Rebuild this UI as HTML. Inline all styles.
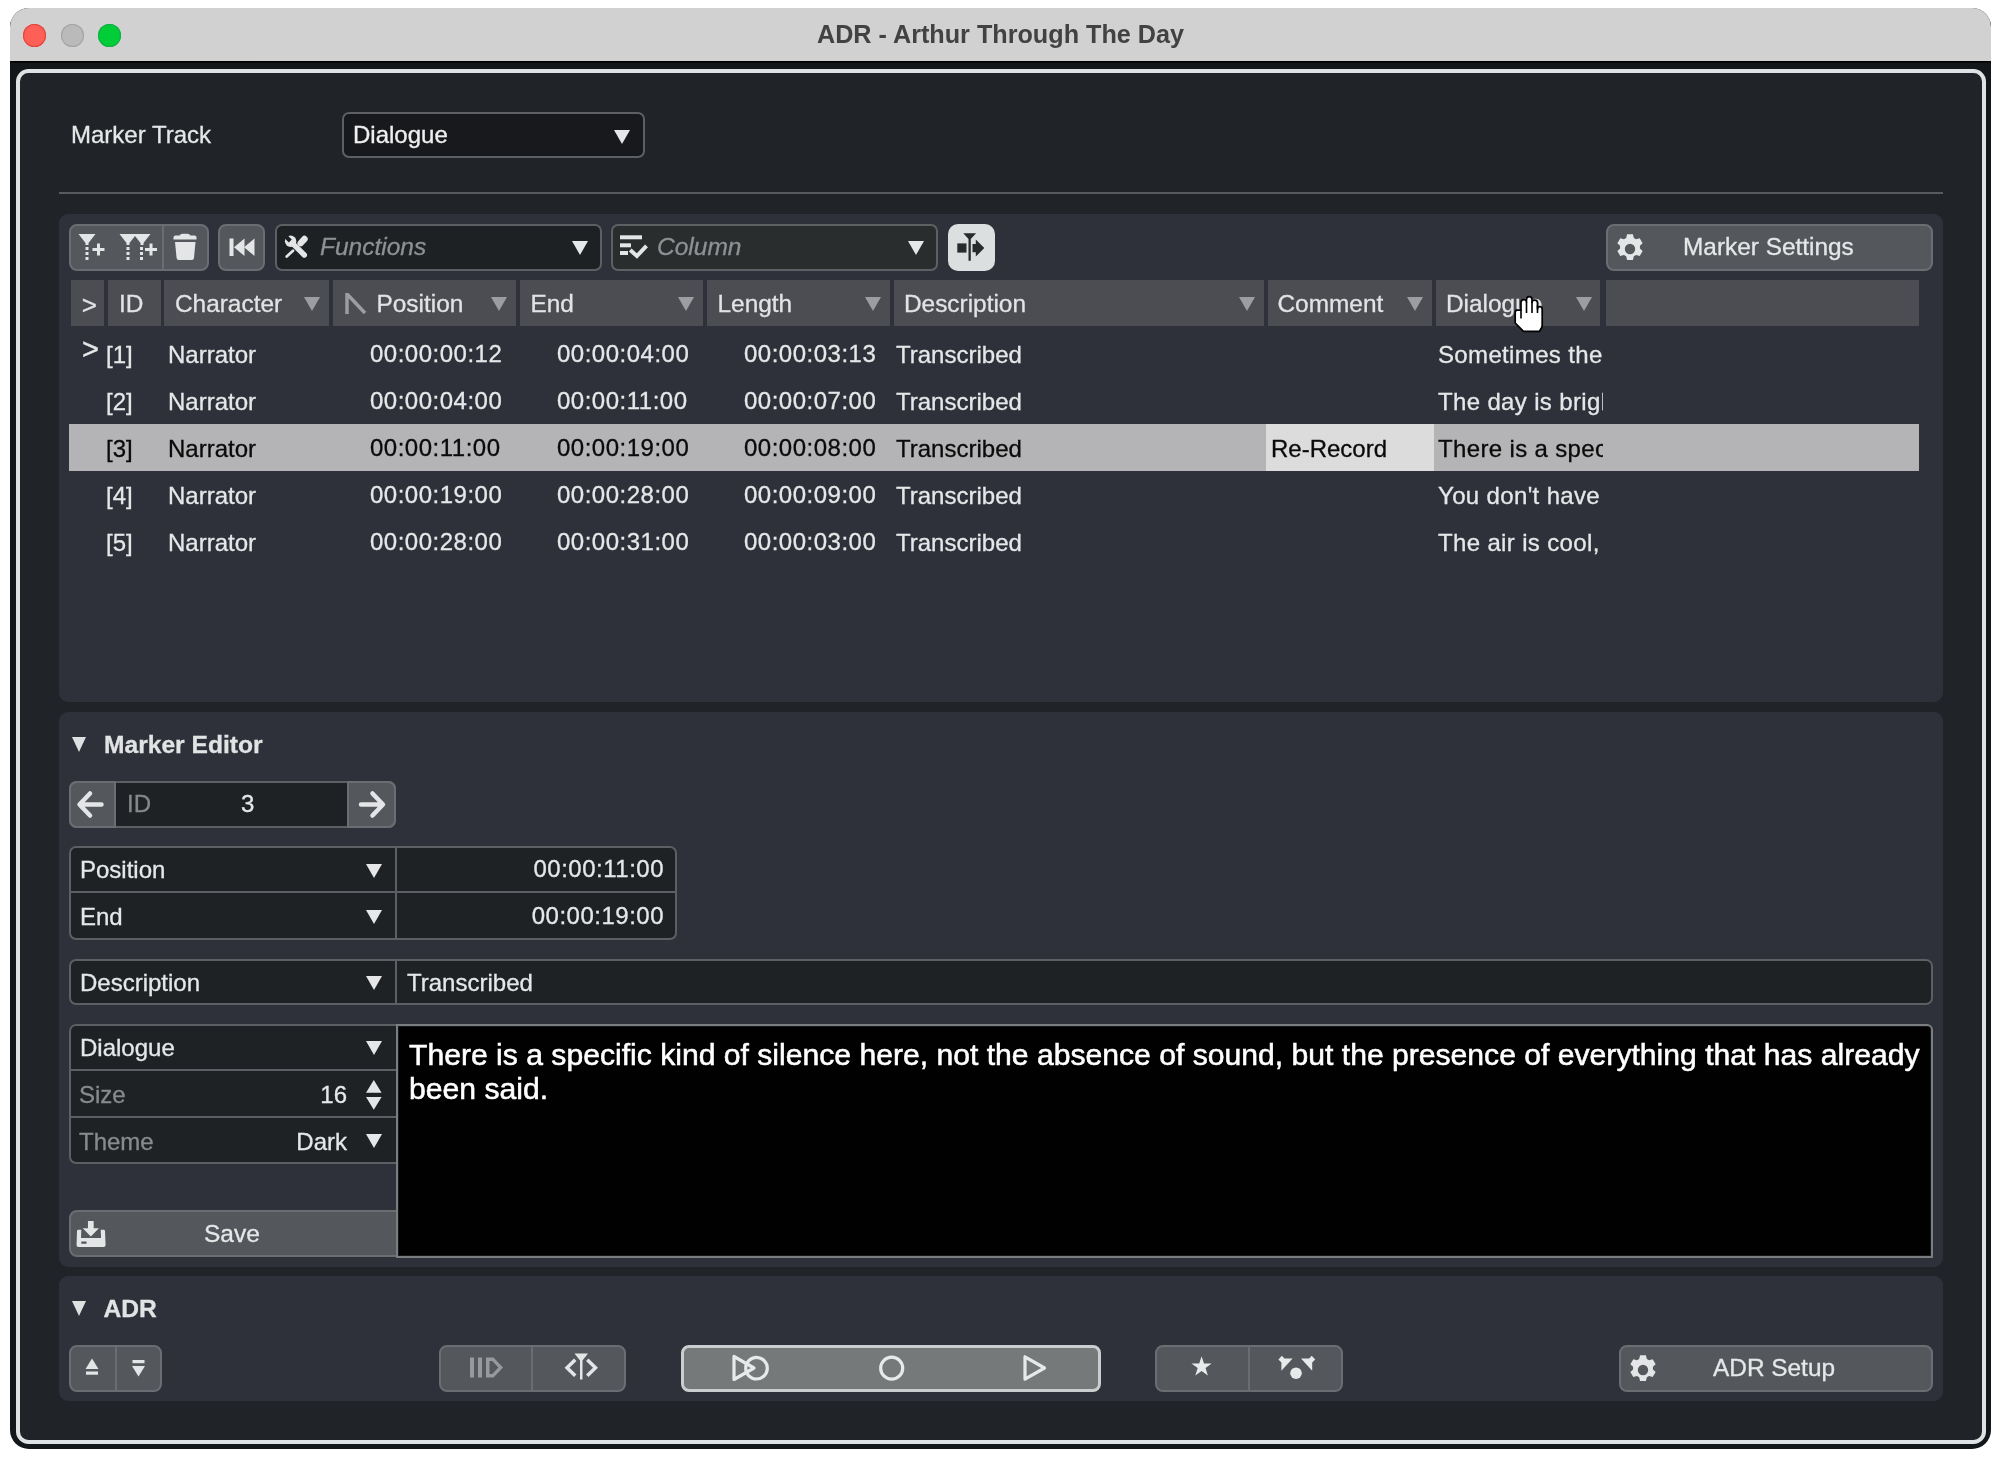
<!DOCTYPE html>
<html><head><meta charset="utf-8"><title>ADR - Arthur Through The Day</title>
<style>
*{box-sizing:border-box;margin:0;padding:0}
html,body{width:2000px;height:1458px;background:#fff;overflow:hidden}
body{font-family:"Liberation Sans",Arial,sans-serif;font-size:24px;color:#e6e7e8;position:relative}
.abs,.abs>*{position:absolute}
.win{position:absolute;left:9.700px;top:8px;width:1981.600px;height:1440.800px;background:#14171a;border-radius:19px;overflow:hidden}
.tbar{position:absolute;left:0;top:0;width:100%;height:52.800px;background:#d1d1d1;border-bottom:0 solid #000;box-shadow:0 1.600px 0 #000}
.title{position:absolute;left:0;top:0;width:100%;height:53px;line-height:52px;text-align:center;font-weight:bold;font-size:25.2px;color:#424242}
.tl{position:absolute;top:15.5px;width:23px;height:23px;border-radius:50%}
.frame{position:absolute;left:16.100px;top:68.700px;width:1969.800px;height:1375.800px;border:4px solid #dfe1e2;border-radius:12.500px;background:#202327}
.panel{position:absolute;left:59.200px;width:1883.600px;background:#2e3139;border-radius:9px}
.t{position:absolute;white-space:nowrap;line-height:30px;height:30px;-webkit-text-stroke:.3px}
.btn{position:absolute;background:#54575b;border:2px solid #6a6d71;border-radius:8px}
.dd{position:absolute;background:#1e2124;border:2px solid #5c5f63;border-radius:7px}
.hc{position:absolute;top:280.300px;height:46px;background:#4b4d52;font-size:24.4px}
.hc .t{top:8.700px;color:#e2e3e4}
.tri{position:absolute;width:0;height:0;border-left:8px solid transparent;border-right:8px solid transparent;border-top:14.500px solid #e6e7e8;margin:-.4px 0 0 -.2px}
.trig{border-top-color:#9b9da0;border-top-width:14.300px;border-left-width:8px;border-right-width:8px}
.row{position:absolute;left:69px;width:1849.500px;height:47px}
.row .t{top:10.300px}
.sel{background:#b4b4b6;color:#0a0a0a}
svg{position:absolute;overflow:visible}
.tc{font-size:24px;letter-spacing:.5px}
.dl{width:165px;overflow:hidden;letter-spacing:.35px}
#root{position:absolute;left:0;top:0;width:2000px;height:1458px;will-change:transform;opacity:.999}
</style></head><body><div id="root">
<svg width="0" height="0" style="position:absolute"><defs>
<path id="gear" fill="#e4e5e6" fill-rule="evenodd" d="M-2.600 -13h5.200l.8 3.300 2 1.100 3.200-1 2.600 4.500-2.400 2.300v2.300l2.400 2.300-2.600 4.500-3.200-1-2 1.100-.8 3.300h-5.200l-.8-3.300-2-1.100-3.200 1-2.600-4.500 2.400-2.300v-2.300l-2.400-2.300 2.600-4.500 3.200 1 2-1.100zM0 -4.600a4.600 4.600 0 1 0 0 9.200a4.600 4.600 0 1 0 0-9.200z"/>
</defs></svg>
<div class="win">
  <div class="tbar"></div>
  <div class="title">ADR - Arthur Through The Day</div>
  <div class="tl" style="left:13.800px;background:#fe5f57;box-shadow:0 0 0 1px #e0443e inset"></div>
  <div class="tl" style="left:51.400px;background:#bababa;box-shadow:0 0 0 1px #a3a3a3 inset"></div>
  <div class="tl" style="left:88.800px;background:#00cd38;box-shadow:0 0 0 1px #14ae46 inset"></div>
</div>
<div class="frame"></div>

<!-- Marker track -->
<div class="t" style="left:71px;top:120px">Marker Track</div>
<div class="dd" style="left:342px;top:111.800px;width:303px;height:46.600px;background:#17191c"></div>
<div class="t" style="left:353px;top:120px;color:#f0f0f0">Dialogue</div>
<div class="tri" style="left:614.3px;top:130.2px"></div>
<div style="position:absolute;left:59.200px;top:192px;width:1883.600px;height:2px;background:#575b5d"></div>

<!-- Panel 1 -->
<div class="panel" style="top:214.400px;height:487.800px"></div>
<!-- toolbar buttons -->
<div class="btn" style="left:69px;top:224px;width:140px;height:47px"></div>
<div style="position:absolute;left:162px;top:226px;width:2px;height:43px;background:#6a6d71"></div>
<svg style="left:69px;top:224px" width="140" height="47" viewBox="69 224 140 47" fill="#e4e5e6">
  <!-- funnel + -->
  <path d="M78.5 234h17l-7 9v2h-3v-2z"/>
  <rect x="85.5" y="247" width="3" height="3"/><rect x="85.5" y="252" width="3" height="3"/><rect x="85.5" y="257" width="3" height="3"/>
  <path d="M97 243.5h3v4.5h4.5v3h-4.5v4.500h-3v-4.500h-4.500v-3h4.500z"/>
  <!-- double funnel + -->
  <path d="M119.500 234h31l-7 9v2h-3v-2l-5.500-7-5.500 7v2h-3v-2z"/>
  <rect x="126.500" y="247" width="3" height="3"/><rect x="126.500" y="252" width="3" height="3"/><rect x="126.500" y="257" width="3" height="3"/>
  <rect x="140" y="247" width="3" height="3"/><rect x="140" y="252" width="3" height="3"/><rect x="140" y="257" width="3" height="3"/>
  <path d="M149.500 243.500h3v4.500h4.500v3h-4.500v4.500h-3v-4.500h-4.500v-3h4.500z"/>
  <!-- trash -->
  <path d="M173.500 237.500q0-2 2-2h4q1-1.700 3-1.700h5q2 0 3 1.700h4q2 0 2 2v2h-23z"/>
  <path d="M175 242h20.500l-1.500 16q-.2 2-2.200 2h-13q-2 0-2.200-2z"/>
</svg>
<div class="btn" style="left:218px;top:224px;width:47px;height:47px"></div>
<svg style="left:218px;top:224px" width="47" height="47" viewBox="218 224 47 47" fill="#e4e5e6">
  <rect x="229.500" y="238.500" width="4" height="17.500"/>
  <path d="M234 247.200l10.500-8.700v17.500z"/><path d="M244 247.200l10.500-8.700v17.500z"/>
</svg>
<!-- Functions dropdown -->
<div class="dd" style="left:275px;top:224px;width:327px;height:47px;background:#1e2124"></div>
<svg style="left:275px;top:224px" width="47" height="47" viewBox="275 224 47 47" fill="none" stroke="#e4e5e6" stroke-linecap="round">
  <path d="M291.500 242.300L304.300 255" stroke-width="5.400"/>
  <circle cx="290.600" cy="241.300" r="5.700" fill="#e4e5e6" stroke="none"/>
  <path d="M290.300 241L284 234.700" stroke="#1e2124" stroke-width="4.200" stroke-linecap="butt"/>
  <path d="M300.700 243.100L304.500 239" stroke-width="6.400"/>
  <path d="M293 250.700L286.700 256.500" stroke-width="2.700"/>
</svg>
<div class="t" style="left:320px;top:232px;font-style:italic;color:#8e9194;font-size:24.5px">Functions</div>
<div class="tri" style="left:572px;top:241.5px"></div>
<!-- Column dropdown -->
<div class="dd" style="left:611px;top:224px;width:327px;height:47px;background:#292d2e;border-color:#5e6164"></div>
<svg style="left:611px;top:224px" width="47" height="47" viewBox="611 224 47 47" fill="#e4e5e6">
  <rect x="620" y="235.300" width="22" height="4"/><rect x="620" y="243.300" width="11" height="4"/><rect x="620" y="251" width="8" height="4"/>
  <path d="M630.200 250l6.700 6 9.600-10.200" fill="none" stroke="#e4e5e6" stroke-width="4"/>
</svg>
<div class="t" style="left:657px;top:232px;font-style:italic;color:#8e9194;font-size:24.5px">Column</div>
<div class="tri" style="left:908.4px;top:241.5px"></div>
<!-- white button -->
<div style="position:absolute;left:947.600px;top:223.700px;width:47.200px;height:47.200px;background:#dcdfdf;border-radius:10px"></div>
<svg style="left:948px;top:224px" width="47" height="47" viewBox="948 224 47 47" fill="#272b2b">
  <path d="M963.300 233.200h12.800l-5.300 5.800v21.800h-2.300v-21.800z"/>
  <rect x="957.300" y="243.400" width="9.200" height="9.200"/>
  <path d="M972.500 243.900h3.300v-4.400l8.500 8.500-8.500 8.600v-4.400h-3.300z"/>
</svg>
<!-- Marker settings -->
<div class="btn" style="left:1606px;top:224px;width:327px;height:47px"></div>
<svg class="gear" style="left:1614.600px;top:234px" width="30" height="30" viewBox="-13.300 -13.300 26.600 26.600"><use href="#gear"/></svg>
<div class="t" style="left:1683px;top:232px;font-size:24.400px;color:#e6e7e8">Marker Settings</div>
<!-- header -->
<div class="hc" style="left:71px;width:33px"><div class="t" style="left:10.800px;font-size:26px;top:10px">&gt;</div></div>
<div class="hc" style="left:108px;width:53px"><div class="t" style="left:11px">ID</div></div>
<div class="hc" style="left:164px;width:165px"><div class="t" style="left:11px">Character</div><div class="tri trig" style="left:139.75px;top:17.400px"></div></div>
<div class="hc" style="left:332.500px;width:183px"><div class="t" style="left:44px">Position</div><div class="tri trig" style="left:158.75px;top:17.400px"></div>
  <svg style="left:12px;top:12px" width="22" height="24" viewBox="0 0 22 24"><path d="M2 1v21M2 2l18 19" stroke="#9b9da0" stroke-width="3.500" fill="none"/></svg></div>
<div class="hc" style="left:519.500px;width:183.500px"><div class="t" style="left:11px">End</div><div class="tri trig" style="left:158.50px;top:17.400px"></div></div>
<div class="hc" style="left:706.500px;width:183.500px"><div class="t" style="left:11px">Length</div><div class="tri trig" style="left:158.50px;top:17.400px"></div></div>
<div class="hc" style="left:894px;width:370px"><div class="t" style="left:10px">Description</div><div class="tri trig" style="left:345.25px;top:17.400px"></div></div>
<div class="hc" style="left:1267.500px;width:164.500px"><div class="t" style="left:10px">Comment</div><div class="tri trig" style="left:140.00px;top:17.400px"></div></div>
<div class="hc" style="left:1436px;width:164px"><div class="t" style="left:10px">Dialogue</div><div class="tri trig" style="left:140.00px;top:17.400px"></div></div>
<div class="hc" style="left:1606px;width:312.500px"></div>
<!-- rows -->
<div class="row" style="top:330px"><div class="t" style="left:13px;top:4px;font-size:29px;-webkit-text-stroke:.4px #e6e7e8">&gt;</div><div class="t" style="left:37px">[1]</div><div class="t" style="left:99px">Narrator</div><div class="t tc" style="left:301px;top:9px">00:00:00:12</div><div class="t tc" style="left:488px;top:9px">00:00:04:00</div><div class="t tc" style="left:675px;top:9px">00:00:03:13</div><div class="t" style="left:827px">Transcribed</div><div class="t dl" style="left:1369px">Sometimes the</div></div>
<div class="row" style="top:377px"><div class="t" style="left:37px">[2]</div><div class="t" style="left:99px">Narrator</div><div class="t tc" style="left:301px;top:9px">00:00:04:00</div><div class="t tc" style="left:488px;top:9px">00:00:11:00</div><div class="t tc" style="left:675px;top:9px">00:00:07:00</div><div class="t" style="left:827px">Transcribed</div><div class="t dl" style="left:1369px">The day is bright</div></div>
<div class="row sel" style="top:424px"><div style="position:absolute;left:1197px;top:0;width:168px;height:47px;background:#dcdcdc"></div><div class="t" style="left:37px">[3]</div><div class="t" style="left:99px">Narrator</div><div class="t tc" style="left:301px;top:9px">00:00:11:00</div><div class="t tc" style="left:488px;top:9px">00:00:19:00</div><div class="t tc" style="left:675px;top:9px">00:00:08:00</div><div class="t" style="left:827px">Transcribed</div><div class="t" style="left:1202px">Re-Record</div><div class="t dl" style="left:1369px">There is a specific</div></div>
<div class="row" style="top:471px"><div class="t" style="left:37px">[4]</div><div class="t" style="left:99px">Narrator</div><div class="t tc" style="left:301px;top:9px">00:00:19:00</div><div class="t tc" style="left:488px;top:9px">00:00:28:00</div><div class="t tc" style="left:675px;top:9px">00:00:09:00</div><div class="t" style="left:827px">Transcribed</div><div class="t dl" style="left:1369px">You don't have</div></div>
<div class="row" style="top:518px"><div class="t" style="left:37px">[5]</div><div class="t" style="left:99px">Narrator</div><div class="t tc" style="left:301px;top:9px">00:00:28:00</div><div class="t tc" style="left:488px;top:9px">00:00:31:00</div><div class="t tc" style="left:675px;top:9px">00:00:03:00</div><div class="t" style="left:827px">Transcribed</div><div class="t dl" style="left:1369px">The air is cool,</div></div>
<svg style="left:1510px;top:290px" width="40" height="46" viewBox="1510 290 40 46">
  <path d="M1515.200 312.500Q1515.200 310.200 1517.500 310.200H1521V302.500Q1521 299.700 1523.800 299.700Q1526.500 299.700 1526.500 302V299.500Q1526.500 296.700 1529.300 296.700Q1532 296.700 1532 299.500V302.500Q1532 300.200 1534.800 300.200Q1537.500 300.200 1537.500 303V309Q1537.500 306.700 1540 306.700Q1542.200 306.700 1542.200 309.500V325Q1542.200 328 1540.500 329.500L1539.500 331.300H1523.500L1515.200 323Z" fill="#fff" stroke="#000" stroke-width="1.700" stroke-linejoin="round"/>
  <path d="M1521 310V318.500M1526.500 302V313M1532 302V313M1537.500 305V313" stroke="#000" stroke-width="1.600" fill="none"/>
</svg>
<!-- PANEL1END -->

<!-- Panel 2 -->
<div class="panel" style="top:711.700px;height:555px"></div>
<div class="tri" style="left:72.500px;top:737px;border-left-width:7.500px;border-right-width:7.500px;border-top-width:15px;border-top-color:#dfe0e1"></div>
<div class="t" style="left:104px;top:730px;font-weight:bold;font-size:24.600px;color:#e2e3e4">Marker Editor</div>
<!-- ID nav -->
<div class="dd" style="left:69px;top:781px;width:327px;height:47px;background:#1f2225;border-color:#5c5f63"></div>
<div class="btn" style="left:69px;top:781px;width:47px;height:47px;border-radius:8px 0 0 8px"></div>
<div class="btn" style="left:347px;top:781px;width:49px;height:47px;border-radius:0 8px 8px 0"></div>
<svg style="left:69px;top:781px" width="327" height="47" viewBox="69 781 327 47" fill="none" stroke="#e4e5e6" stroke-width="4.500" stroke-linecap="round" stroke-linejoin="round">
  <path d="M101.500 804.500h-21M90 793.500l-10.500 11 10.500 11"/>
  <path d="M361 804.500h21M372.500 793.500l10.500 11-10.500 11"/>
</svg>
<div class="t" style="left:127px;top:789px;color:#85888b">ID</div>
<div class="t" style="left:241px;top:789px;color:#e6e7e8">3</div>
<!-- Position / End -->
<div class="dd" style="left:69px;top:846px;width:608px;height:94px;background:#1f2225"></div>
<div style="position:absolute;left:70px;top:891px;width:606px;height:2px;background:#5c5f63"></div>
<div style="position:absolute;left:394.500px;top:847px;width:2px;height:92px;background:#5c5f63"></div>
<div class="t" style="left:80px;top:855px">Position</div><div class="tri" style="left:366px;top:864.500px"></div>
<div class="t tc" style="left:464px;top:854px;width:200px;text-align:right">00:00:11:00</div>
<div class="t" style="left:80px;top:902px">End</div><div class="tri" style="left:366px;top:910.800px"></div>
<div class="t tc" style="left:464px;top:901px;width:200px;text-align:right">00:00:19:00</div>
<!-- Description -->
<div class="dd" style="left:69px;top:959px;width:1864px;height:45.600px;background:#1f2225"></div>
<div style="position:absolute;left:394.500px;top:960px;width:2px;height:44px;background:#5c5f63"></div>
<div class="t" style="left:80px;top:967.700px">Description</div><div class="tri" style="left:366px;top:976px"></div>
<div class="t" style="left:407px;top:967.700px">Transcribed</div>
<!-- Dialogue group -->
<div class="dd" style="left:69px;top:1024px;width:329px;height:140px;background:#1f2225;border-radius:7px 0 0 7px"></div>
<div style="position:absolute;left:70px;top:1069px;width:327px;height:2px;background:#5c5f63"></div>
<div style="position:absolute;left:70px;top:1116px;width:327px;height:2px;background:#5c5f63"></div>
<div class="t" style="left:80px;top:1032.700px">Dialogue</div><div class="tri" style="left:366px;top:1041.800px"></div>
<div class="t" style="left:79px;top:1079.700px;color:#888b8e">Size</div>
<div class="t" style="left:247px;top:1079.700px;width:100px;text-align:right">16</div>
<svg style="left:366px;top:1080px" width="16" height="30" viewBox="0 0 16 30" fill="#e4e5e6"><path d="M7.800 0l7.800 12.700h-15.600zM7.800 29.800l7.800-12.700h-15.600z"/></svg>
<div class="t" style="left:79px;top:1126.700px;color:#888b8e">Theme</div>
<div class="t" style="left:247px;top:1126.700px;width:100px;text-align:right">Dark</div><div class="tri" style="left:366px;top:1134.800px"></div>
<!-- Save -->
<div class="btn" style="left:69px;top:1210px;width:329px;height:47px;border-radius:8px 0 0 8px"></div>
<svg style="left:76.700px;top:1220.800px" width="28.600" height="27" viewBox="0 0 30 28" preserveAspectRatio="none" fill="#e4e5e6">
  <path d="M11.500 0h6v7.500h5.500l-8.500 8.500-8.500-8.500h5.500z"/>
  <path fill-rule="evenodd" d="M0 10.500q0-1.500 1.500-1.500h3l-0.300 8.500h21l-0.300-8.500h3q1.500 0 1.500 1.500l.6 14.500q0 2-2 2h-26.500q-2 0-2-2zM4.500 21.300v2.200h5.500v-2.200z"/>
</svg>
<div class="t" style="left:204px;top:1219px;font-size:24.500px">Save</div>
<!-- Text area -->
<div style="position:absolute;left:396.200px;top:1024px;width:1536.800px;height:233.500px;background:#000;border:2.200px solid #7a7e81;border-radius:0 6px 0 0;box-shadow:inset 0 0 0 1px #15171a"></div>
<div class="t" style="left:409px;top:1037.500px;font-size:30.130px;line-height:34px;height:auto;color:#fff;white-space:normal;width:1520px;-webkit-text-stroke:.55px #fff">There is a specific kind of silence here, not the absence of sound, but the presence of everything that has already been said.</div>
<!-- PANEL2END -->

<!-- Panel 3 -->
<div class="panel" style="top:1276px;height:124.500px"></div>
<div class="tri" style="left:72.500px;top:1301px;border-left-width:7.500px;border-right-width:7.500px;border-top-width:15px;border-top-color:#dfe0e1"></div>
<div class="t" style="left:103.500px;top:1294px;font-weight:bold;font-size:24.600px;color:#e2e3e4">ADR</div>
<!-- group1 -->
<div class="btn" style="left:69px;top:1345px;width:93px;height:47px"></div>
<div style="position:absolute;left:114.500px;top:1347px;width:2px;height:43px;background:#6a6d71"></div>
<svg style="left:69px;top:1345px" width="93" height="47" viewBox="69 1345 93 47" fill="#e4e5e6">
  <path d="M92 1358.500l6.500 10.500h-13z"/><rect x="86" y="1371.500" width="12" height="3.200"/>
  <rect x="132.500" y="1360" width="12" height="3.200"/><path d="M138.500 1376.500l6.500-10.500h-13z"/>
</svg>
<!-- group2 -->
<div class="btn" style="left:439px;top:1345px;width:187px;height:47px"></div>
<div style="position:absolute;left:531px;top:1347px;width:2px;height:43px;background:#6a6d71"></div>
<svg style="left:439px;top:1345px" width="188" height="47" viewBox="439 1345 188 47">
  <g fill="#97999c"><rect x="470" y="1357.500" width="4" height="20"/><rect x="478" y="1357.500" width="4" height="20"/>
  <path fill-rule="evenodd" d="M486 1357.500h7.500l9.500 10-9.500 10h-7.500zM489.500 1361v13h2.700l6.200-6.500-6.200-6.500z"/></g>
  <g fill="#e4e5e6"><path d="M574.500 1353.500h13.500l-5.500 7v19h-2.500v-19z"/>
  <path d="M574 1358.500l2.500 2.500-7 6.700 7 6.800-2.500 2.500-9.500-9.300zM588.500 1358.500l-2.500 2.500 7 6.700-7 6.800 2.500 2.500 9.500-9.300z"/></g>
</svg>
<!-- group3 -->
<div style="position:absolute;left:680.500px;top:1345px;width:420px;height:47px;background:#76797a;border:3px solid #cbcdce;border-radius:8px"></div>
<svg style="left:680px;top:1345px" width="421" height="47" viewBox="680 1345 421 47" fill="none" stroke="#e8e9ea" stroke-width="3.200" stroke-linejoin="round">
  <path d="M734 1356.500v23l20-11.500z"/><circle cx="756.500" cy="1368.200" r="10.800"/>
  <circle cx="891.700" cy="1368.200" r="11"/>
  <path d="M1025 1356.800v22.400l19.500-11.200z"/>
</svg>
<!-- group4 -->
<div class="btn" style="left:1155px;top:1345px;width:187.500px;height:47px"></div>
<div style="position:absolute;left:1247.500px;top:1347px;width:2px;height:43px;background:#6a6d71"></div>
<svg style="left:1155px;top:1345px" width="188" height="47" viewBox="1155 1345 188 47" fill="#e8e9ea">
  <path d="M1201.600 1356.300l2.400 7.300h7.700l-6.200 4.500 2.400 7.300-6.300-4.500-6.300 4.500 2.400-7.300-6.200-4.500h7.700z"/>
  <circle cx="1296" cy="1373.200" r="5.800"/>
  <path d="M1278.400 1359.500l3.500-3.800 2.500 2.800h8.200l-11.200 12.300v-8.300z"/>
  <path d="M1315.200 1359.500l-3.500-3.800-2.500 2.800h-8.200l11.200 12.300v-8.300z"/>
</svg>
<!-- ADR setup -->
<div class="btn" style="left:1619px;top:1345px;width:314px;height:47px"></div>
<svg style="left:1627.600px;top:1355px" width="30" height="30" viewBox="-13.300 -13.300 26.600 26.600"><use href="#gear"/></svg>
<div class="t" style="left:1713px;top:1353px;font-size:24.400px">ADR Setup</div>
<!-- PANEL3END -->

</div></body></html>
